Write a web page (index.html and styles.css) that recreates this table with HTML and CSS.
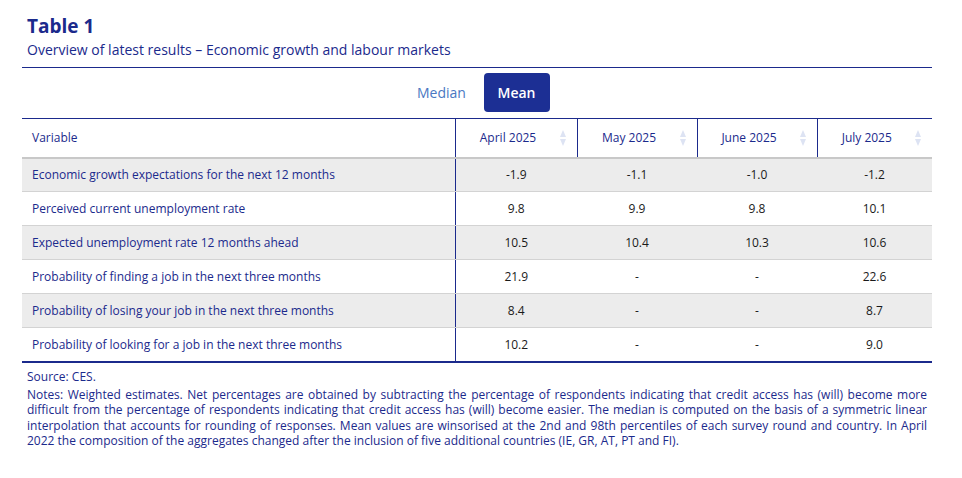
FILE: index.html
```html
<!DOCTYPE html>
<html lang="en">
<head>
<meta charset="utf-8">
<title>Table 1</title>
<link rel="stylesheet" href="styles.css">
</head>
<body>
<div class="box">
  <h1 class="title">Table 1</h1>
  <p class="subtitle">Overview of latest results – Economic growth and labour markets</p>
  <div class="toggle">
    <button class="tab">Median</button>
    <button class="tab active">Mean</button>
  </div>
  <table class="data">
    <colgroup>
      <col class="c-var"><col class="c-a"><col class="c-b"><col class="c-c"><col class="c-d">
    </colgroup>
    <thead>
      <tr>
        <th class="var">Variable</th>
        <th><span class="th-in">April 2025<span class="sort"></span></span></th>
        <th><span class="th-in">May 2025<span class="sort"></span></span></th>
        <th><span class="th-in">June 2025<span class="sort"></span></span></th>
        <th class="last"><span class="th-in">July 2025<span class="sort"></span></span></th>
      </tr>
    </thead>
    <tbody>
      <tr class="odd"><td class="var">Economic growth expectations for the next 12 months</td><td>-1.9</td><td>-1.1</td><td>-1.0</td><td>-1.2</td></tr>
      <tr><td class="var">Perceived current unemployment rate</td><td>9.8</td><td>9.9</td><td>9.8</td><td>10.1</td></tr>
      <tr class="odd"><td class="var">Expected unemployment rate 12 months ahead</td><td>10.5</td><td>10.4</td><td>10.3</td><td>10.6</td></tr>
      <tr><td class="var">Probability of finding a job in the next three months</td><td>21.9</td><td>-</td><td>-</td><td>22.6</td></tr>
      <tr class="odd"><td class="var">Probability of losing your job in the next three months</td><td>8.4</td><td>-</td><td>-</td><td>8.7</td></tr>
      <tr><td class="var">Probability of looking for a job in the next three months</td><td>10.2</td><td>-</td><td>-</td><td>9.0</td></tr>
    </tbody>
  </table>
  <p class="source">Source: CES.</p>
  <p class="notes">Notes: Weighted estimates. Net percentages are obtained by subtracting the percentage of respondents indicating that credit access has (will) become more difficult from the percentage of respondents indicating that credit access has (will) become easier. The median is computed on the basis of a symmetric linear interpolation that accounts for rounding of responses. Mean values are winsorised at the 2nd and 98th percentiles of each survey round and country. In April 2022 the composition of the aggregates changed after the inclusion of five additional countries (IE, GR, AT, PT and FI).</p>
</div>
</body>
</html>
```

FILE: styles.css
```css
* { box-sizing: border-box; }
html, body { margin: 0; padding: 0; background: #ffffff; }
body { font-family: "Open Sans", "Noto Sans", sans-serif; color: #1b2a8c; }

.box { width: 910px; margin-left: 22px; }

.title {
  margin: 0;
  padding: 14px 0 0 5px;
  font-size: 19px;
  font-weight: 700;
  line-height: 24px;
  color: #1b2a8c;
}
.subtitle {
  margin: 0;
  padding: 0 0 5px 5px;
  font-size: 14px;
  line-height: 24px;
  border-bottom: 1px solid #1b2a8c;
}

.toggle {
  display: flex;
  justify-content: center;
  gap: 9px;
  padding: 5px 0 6px 4px;
}
.tab {
  font-family: inherit;
  font-size: 14px;
  width: 66px;
  height: 39px;
  border: 0;
  border-radius: 4px;
  background: transparent;
  color: #4a78c2;
  padding: 0;
}
.tab.active { background: #1c2f94; color: #ffffff; font-weight: 600; }

.data {
  width: 910px;
  border-collapse: collapse;
  table-layout: fixed;
  font-size: 12px;
  border-top: 1px solid #1b2a8c;
  border-bottom: 2px solid #1b2a8c;
}
.c-var { width: 433px; }
.c-a { width: 122px; }
.c-b { width: 120px; }
.c-c { width: 120px; }
.c-d { width: 115px; }

.data th {
  height: 39px;
  font-weight: 400;
  text-align: center;
  color: #1b2a8c;
  border-right: 1px solid #1b2a8c;
  border-bottom: 2px solid #c8c8c8;
  padding: 0;
}
.data th.last { border-right: 0; }
.data th.var, .data td.var {
  text-align: left;
  padding-left: 10px;
  border-right: 1px solid #1b2a8c;
  color: #1b2a8c;
}
.th-in {
  display: flex;
  align-items: center;
  justify-content: center;
  position: relative;
  padding-right: 16px;
}
.sort {
  position: absolute;
  right: 10px;
  top: 50%;
  margin-top: -8px;
  width: 7px;
  height: 16px;
  display: flex;
  flex-direction: column;
  justify-content: space-between;
}
.sort::before, .sort::after {
  content: "";
  display: block;
  width: 0; height: 0;
  border-left: 3.5px solid transparent;
  border-right: 3.5px solid transparent;
}
.sort::before { border-bottom: 7px solid #dde3f3; }
.sort::after { border-top: 7px solid #dde3f3; }

.data td {
  height: 34px;
  text-align: center;
  color: #1a1a1a;
  padding: 0;
  border-bottom: 1px solid #d3d3d3;
}
.data tbody tr:last-child td { border-bottom: 0; }
.data tr.odd td { background: #ececec; }

.source {
  margin: 5px 0 0 5px;
  font-size: 12px;
  line-height: 17px;
}
.notes {
  margin: 2px 5px 0 5px;
  font-size: 12px;
  line-height: 15.6px;
  text-align: justify;
}
```
